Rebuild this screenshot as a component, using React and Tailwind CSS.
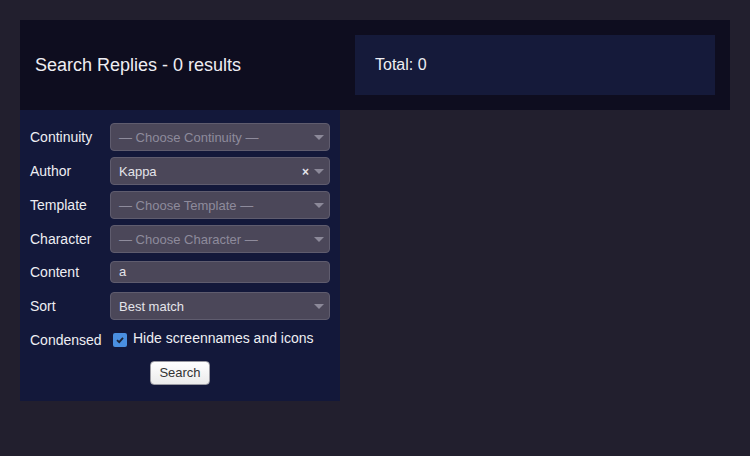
import React from "react";

function Arrow() {
  return (
    <svg width="10" height="6" viewBox="0 0 10 6" className="shrink-0">
      <path d="M0 0 L10 0 L5 5 Z" fill="#8c8999" />
    </svg>
  );
}

function Select({ value, placeholder, clearable }) {
  return (
    <div className="w-[220px] h-[28px] rounded-[4px] border border-[#5f5c6e] bg-[#4b4759] flex items-center pl-[8px] pr-[5px] pt-[1px] text-[13px]">
      <span className={"flex-1 " + (value ? "text-[#e4e4ea]" : "text-[#8e8b9c]")}>
        {value || placeholder}
      </span>
      {clearable && <span className="text-[#e4e4ea] text-[12px] font-bold mr-[5px] leading-none">×</span>}
      <Arrow />
    </div>
  );
}

function Row({ label, children, className = "" }) {
  return (
    <div className={"flex items-center " + className}>
      <div className="w-[80px] text-[14px] leading-[20px] text-[#eeeef3]">{label}</div>
      {children}
    </div>
  );
}

export default function App() {
  return (
    <div className="w-[750px] h-[456px] bg-[#221f2e] p-[20px]" style={{ fontFamily: '"Liberation Sans", Arial, sans-serif' }}>
      <div className="h-[90px] bg-[#0e0d1f] flex items-center">
        <div className="flex-1 pl-[15px] text-[18px] text-[#eeeef3]">Search Replies - 0 results</div>
        <div className="w-[360px] h-[60px] mr-[15px] bg-[#151a3a] flex items-center px-[20px] text-[16px] text-[#eeeef3]">
          Total: 0
        </div>
      </div>
      <div className="w-[320px] bg-[#13183a] px-[10px] pt-[13px] pb-[16px]">
        <Row label="Continuity"><Select placeholder="— Choose Continuity —" /></Row>
        <Row label="Author" className="mt-[6px]"><Select value="Kappa" clearable /></Row>
        <Row label="Template" className="mt-[6px]"><Select placeholder="— Choose Template —" /></Row>
        <Row label="Character" className="mt-[6px]"><Select placeholder="— Choose Character —" /></Row>
        <Row label="Content" className="mt-[8px]">
          <div className="w-[220px] h-[22px] rounded-[4px] border border-[#5f5c6e] bg-[#4b4759] flex items-center px-[8px] text-[13px] text-[#e4e4ea]">a</div>
        </Row>
        <Row label="Sort" className="mt-[9px]"><Select value="Best match" /></Row>
        <div className="flex items-center mt-[10px] h-[20px]">
          <div className="w-[80px] text-[14px] leading-[20px] text-[#eeeef3]">Condensed</div>
          <div className="ml-[3px] w-[14px] h-[14px] rounded-[2px] bg-[#4a8fe0] flex items-center justify-center">
            <svg width="10" height="10" viewBox="0 0 10 10">
              <path d="M2 5.2 L4.2 7.2 L8 2.8" stroke="#1b2234" strokeWidth="1.8" fill="none" />
            </svg>
          </div>
          <span className="ml-[6px] text-[14px] leading-[20px] text-[#eeeef3] -translate-y-[2px]">Hide screennames and icons</span>
        </div>
        <div className="flex justify-center mt-[11px]">
          <div className="w-[60px] h-[24px] rounded-[4px] border border-[#9a9aa2] bg-gradient-to-b from-[#ffffff] to-[#ebebeb] flex items-center justify-center text-[13px] text-[#333]">
            Search
          </div>
        </div>
      </div>
    </div>
  );
}
